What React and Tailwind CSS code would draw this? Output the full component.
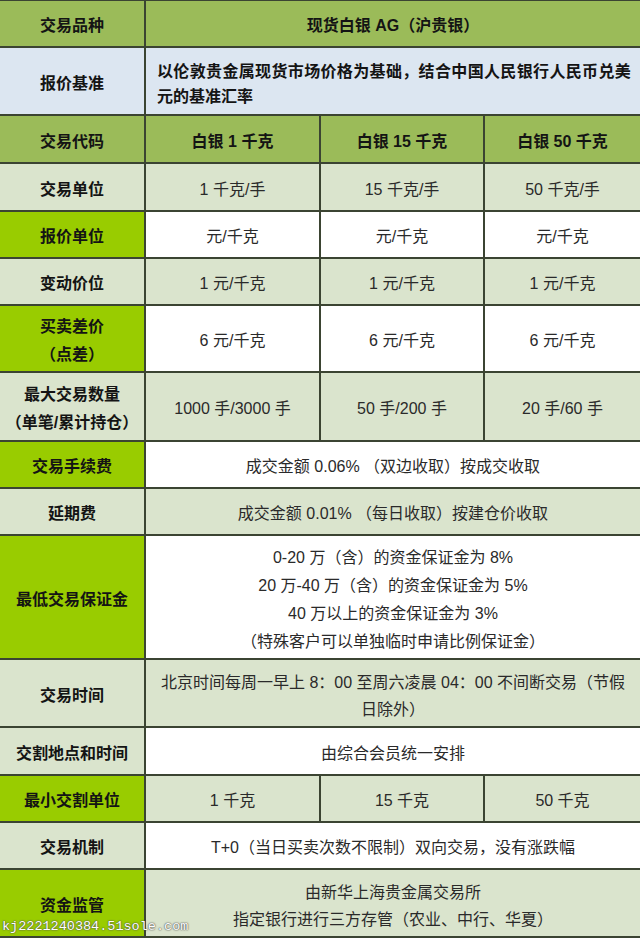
import React from "react";

const C = {
  green: "bg-[#9bbb59]",
  blue: "bg-[#dce6f1]",
  light: "bg-[#dae4cd]",
  bright: "bg-[#99cc00]",
  white: "bg-white",
};

function Cell({ bg, bold, span, left, children, lh = "leading-[28px]" }) {
  return (
    <div
      className={`${bg} ${span ? "col-span-3" : ""} flex items-center ${
        left ? "justify-start pl-[11px]" : "justify-center text-center"
      } pt-[5px] ${lh} text-[16px] ${
        bold ? "font-bold text-[#141414]" : "font-normal text-[#2a2a2a]"
      }`}
    >
      <div>{children}</div>
    </div>
  );
}

function Row({ h, children }) {
  return (
    <div className={`grid grid-cols-[144px_173px_162px_155px] gap-[2px] ${h}`}>
      {children}
    </div>
  );
}

export default function App() {
  return (
    <div className="relative w-[640px] h-[938px] overflow-hidden bg-[#3b4432] flex flex-col gap-[2px] pt-[1px] pb-[2px] font-['Liberation_Sans','Noto_Sans_CJK_SC',sans-serif]">
      <Row h="h-[45px]">
        <Cell bg={C.green} bold>交易品种</Cell>
        <Cell bg={C.green} bold span>现货白银 AG（沪贵银）</Cell>
      </Row>
      <Row h="h-[66px]">
        <Cell bg={C.blue} bold>报价基准</Cell>
        <Cell bg={C.blue} bold span left lh="leading-[25px]">
          <span className="tracking-[0.35px]">以伦敦贵金属现货市场价格为基础，结合中国人民银行人民币兑美</span>
          <br />
          元的基准汇率
        </Cell>
      </Row>
      <Row h="h-[46px]">
        <Cell bg={C.green} bold>交易代码</Cell>
        <Cell bg={C.green} bold>白银 1 千克</Cell>
        <Cell bg={C.green} bold>白银 15 千克</Cell>
        <Cell bg={C.green} bold>白银 50 千克</Cell>
      </Row>
      <Row h="h-[46px]">
        <Cell bg={C.light} bold>交易单位</Cell>
        <Cell bg={C.light}>1 千克/手</Cell>
        <Cell bg={C.light}>15 千克/手</Cell>
        <Cell bg={C.light}>50 千克/手</Cell>
      </Row>
      <Row h="h-[45px]">
        <Cell bg={C.bright} bold>报价单位</Cell>
        <Cell bg={C.white}>元/千克</Cell>
        <Cell bg={C.white}>元/千克</Cell>
        <Cell bg={C.white}>元/千克</Cell>
      </Row>
      <Row h="h-[45px]">
        <Cell bg={C.light} bold>变动价位</Cell>
        <Cell bg={C.light}>1 元/千克</Cell>
        <Cell bg={C.light}>1 元/千克</Cell>
        <Cell bg={C.light}>1 元/千克</Cell>
      </Row>
      <Row h="h-[65px]">
        <Cell bg={C.bright} bold>
          买卖差价
          <br />
          （点差）
        </Cell>
        <Cell bg={C.white}>6 元/千克</Cell>
        <Cell bg={C.white}>6 元/千克</Cell>
        <Cell bg={C.white}>6 元/千克</Cell>
      </Row>
      <Row h="h-[67px]">
        <Cell bg={C.light} bold>
          最大交易数量
          <br />
          （单笔/累计持仓）
        </Cell>
        <Cell bg={C.light}>1000 手/3000 手</Cell>
        <Cell bg={C.light}>50 手/200 手</Cell>
        <Cell bg={C.light}>20 手/60 手</Cell>
      </Row>
      <Row h="h-[45px]">
        <Cell bg={C.bright} bold>交易手续费</Cell>
        <Cell bg={C.white} span>成交金额 0.06% （双边收取）按成交收取</Cell>
      </Row>
      <Row h="h-[45px]">
        <Cell bg={C.light} bold>延期费</Cell>
        <Cell bg={C.light} span>成交金额 0.01% （每日收取）按建仓价收取</Cell>
      </Row>
      <Row h="h-[122px]">
        <Cell bg={C.bright} bold>最低交易保证金</Cell>
        <Cell bg={C.white} span>
          0-20 万（含）的资金保证金为 8%
          <br />
          20 万-40 万（含）的资金保证金为 5%
          <br />
          40 万以上的资金保证金为 3%
          <br />
          （特殊客户可以单独临时申请比例保证金）
        </Cell>
      </Row>
      <Row h="h-[66px]">
        <Cell bg={C.light} bold>交易时间</Cell>
        <Cell bg={C.light} span lh="leading-[27px]">
          北京时间每周一早上 8：00 至周六凌晨 04：00 不间断交易（节假
          <br />
          日除外）
        </Cell>
      </Row>
      <Row h="h-[46px]">
        <Cell bg={C.light} bold>交割地点和时间</Cell>
        <Cell bg={C.white} span>由综合会员统一安排</Cell>
      </Row>
      <Row h="h-[45px]">
        <Cell bg={C.bright} bold>最小交割单位</Cell>
        <Cell bg={C.light}>1 千克</Cell>
        <Cell bg={C.light}>15 千克</Cell>
        <Cell bg={C.light}>50 千克</Cell>
      </Row>
      <Row h="h-[45px]">
        <Cell bg={C.light} bold>交易机制</Cell>
        <Cell bg={C.white} span>T+0（当日买卖次数不限制）双向交易，没有涨跌幅</Cell>
      </Row>
      <Row h="h-[66px]">
        <Cell bg={C.bright} bold>资金监管</Cell>
        <Cell bg={C.light} span lh="leading-[27px]">
          由新华上海贵金属交易所
          <br />
          指定银行进行三方存管（农业、中行、华夏）
        </Cell>
      </Row>
      <div className="absolute left-[2px] top-[918px] text-[13.5px] leading-[18px] text-white [text-shadow:0_0_2px_#555,0_0_1px_#333] font-['Liberation_Mono','DejaVu_Sans_Mono',monospace]">
        kj2221240384.51sole.com
      </div>
    </div>
  );
}
